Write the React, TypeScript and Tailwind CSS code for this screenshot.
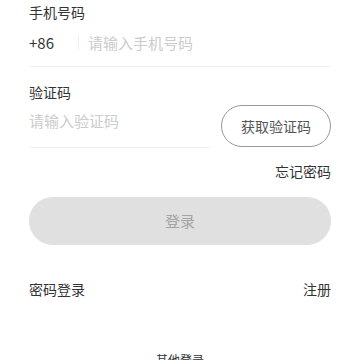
import React from "react";

export default function App() {
  return (
    <div
      className="w-[360px] h-[360px] overflow-hidden bg-white px-[29px] text-[#333]"
      style={{ fontFamily: '"Noto Sans CJK SC", "Noto Sans", sans-serif' }}
    >
      <div className="h-[24px] leading-[24px] text-[14px]">手机号码</div>
      <div className="flex items-center pt-[9px] pb-[13px] border-b border-[#f0f0f0]">
        <div className="w-[49px] h-[20px] leading-[20px] text-[15px]">+86</div>
        <div className="w-px h-[14px] bg-[#eeeeee]" />
        <div className="ml-[9px] h-[20px] leading-[20px] text-[15px] text-[#cccccc]">
          请输入手机号码
        </div>
      </div>
      <div className="mt-[13px] h-[24px] leading-[24px] text-[14px]">验证码</div>
      <div className="flex items-start">
        <div className="w-[181px] pt-[7px] pb-[16px] border-b border-[#f0f0f0] h-[20px] box-content leading-[20px] text-[15px] text-[#cccccc]">
          请输入验证码
        </div>
        <div className="ml-[11px] mt-[1px] w-[110px] h-[42px] rounded-full border border-[#999999] flex items-center justify-center text-[14px] text-[#555555]">
          获取验证码
        </div>
      </div>
      <div className="mt-[13px] h-[20px] leading-[20px] text-right text-[14px]">忘记密码</div>
      <div className="mt-[16px] h-[48px] rounded-full bg-[#e0e0e0] flex items-center justify-center text-[15px] text-[#a3a3a3]">
        登录
      </div>
      <div className="mt-[34px] h-[20px] leading-[20px] flex justify-between text-[14px]">
        <span>密码登录</span>
        <span>注册</span>
      </div>
      <div className="mt-[51px] h-[20px] flex items-center">
        <div className="flex-1 h-px bg-[#eeeeee]" />
        <div className="mx-[16px] leading-[20px] text-[12px] text-[#333]">其他登录</div>
        <div className="flex-1 h-px bg-[#eeeeee]" />
      </div>
    </div>
  );
}
